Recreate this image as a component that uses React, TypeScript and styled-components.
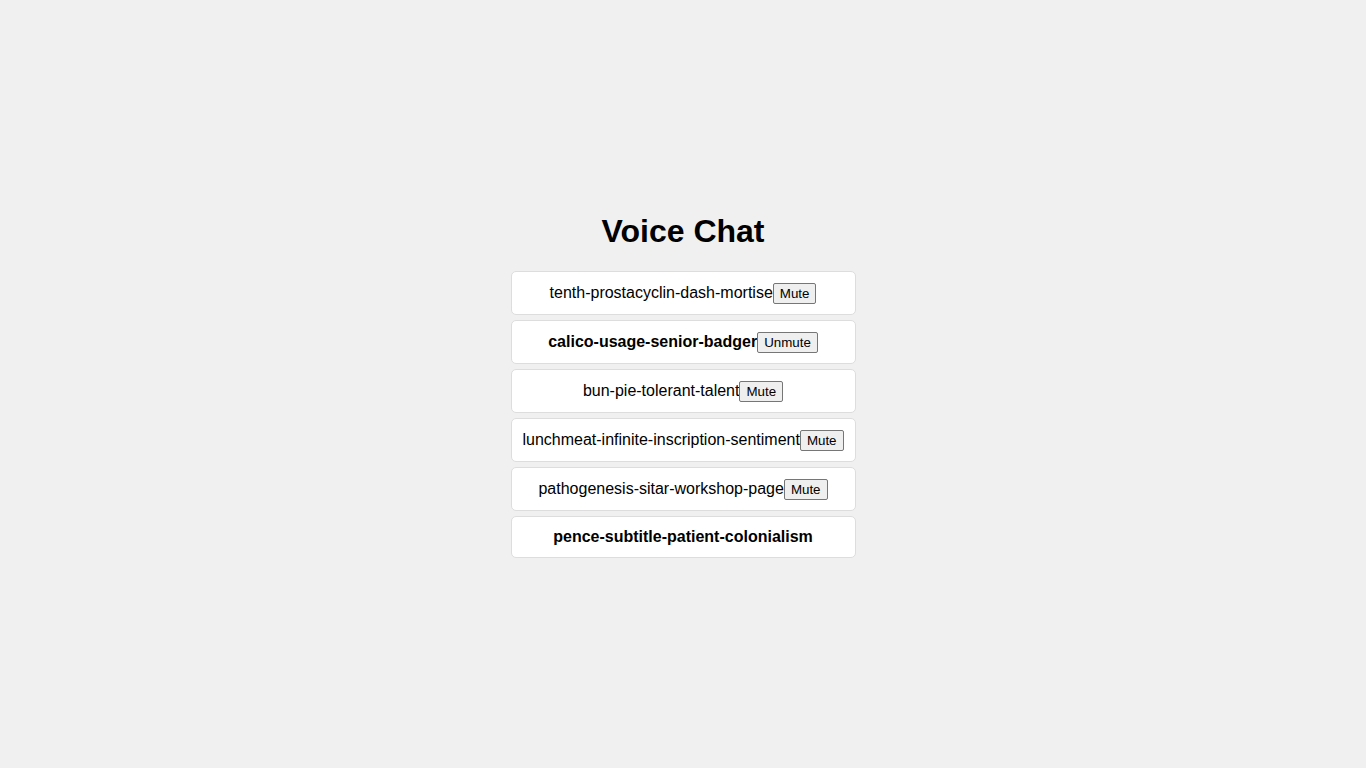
import React from "react";
import styled, { createGlobalStyle } from "styled-components";

const Global = createGlobalStyle`
  html, body { margin: 0; padding: 0; }
  body {
    background: #f0f0f0;
    font-family: "Liberation Sans", Arial, sans-serif;
    color: #000;
  }
`;

const Page = styled.div`
  box-sizing: border-box;
  min-height: 100vh;
  padding-top: 2px;
  display: flex;
  flex-direction: column;
  align-items: center;
  justify-content: center;
`;

const Title = styled.h1`
  margin: 0 0 21px;
  font-size: 32px;
  font-weight: bold;
  line-height: 37px;
`;

const List = styled.div`
  display: flex;
  flex-direction: column;
  gap: 5px;
  width: 345px;
`;

const Card = styled.div<{ $bold: boolean }>`
  box-sizing: border-box;
  background: #fff;
  border: 1px solid #ddd;
  border-radius: 5px;
  padding: 11px 10px;
  text-align: center;
  font-size: 16px;
  line-height: 18px;
  font-weight: ${(p) => (p.$bold ? "bold" : "normal")};
`;

const Button = styled.button`
  font-family: "Liberation Sans", Arial, sans-serif;
  font-size: 13.33px;
  font-weight: normal;
  line-height: normal;
  padding: 2px 6px;
  margin: 0 0 -1px;
  border: 1px solid #767676;
  border-radius: 2px;
  background: #efefef;
  color: #000;
  vertical-align: baseline;
`;

const users = [
  { name: "tenth-prostacyclin-dash-mortise", bold: false, action: "Mute" },
  { name: "calico-usage-senior-badger", bold: true, action: "Unmute" },
  { name: "bun-pie-tolerant-talent", bold: false, action: "Mute" },
  { name: "lunchmeat-infinite-inscription-sentiment", bold: false, action: "Mute" },
  { name: "pathogenesis-sitar-workshop-page", bold: false, action: "Mute" },
  { name: "pence-subtitle-patient-colonialism", bold: true, action: null },
];

export default function App() {
  return (
    <>
      <Global />
      <Page>
        <Title>Voice Chat</Title>
        <List>
          {users.map((u) => (
            <Card key={u.name} $bold={u.bold}>
              {u.name}
              {u.action && <Button>{u.action}</Button>}
            </Card>
          ))}
        </List>
      </Page>
    </>
  );
}
